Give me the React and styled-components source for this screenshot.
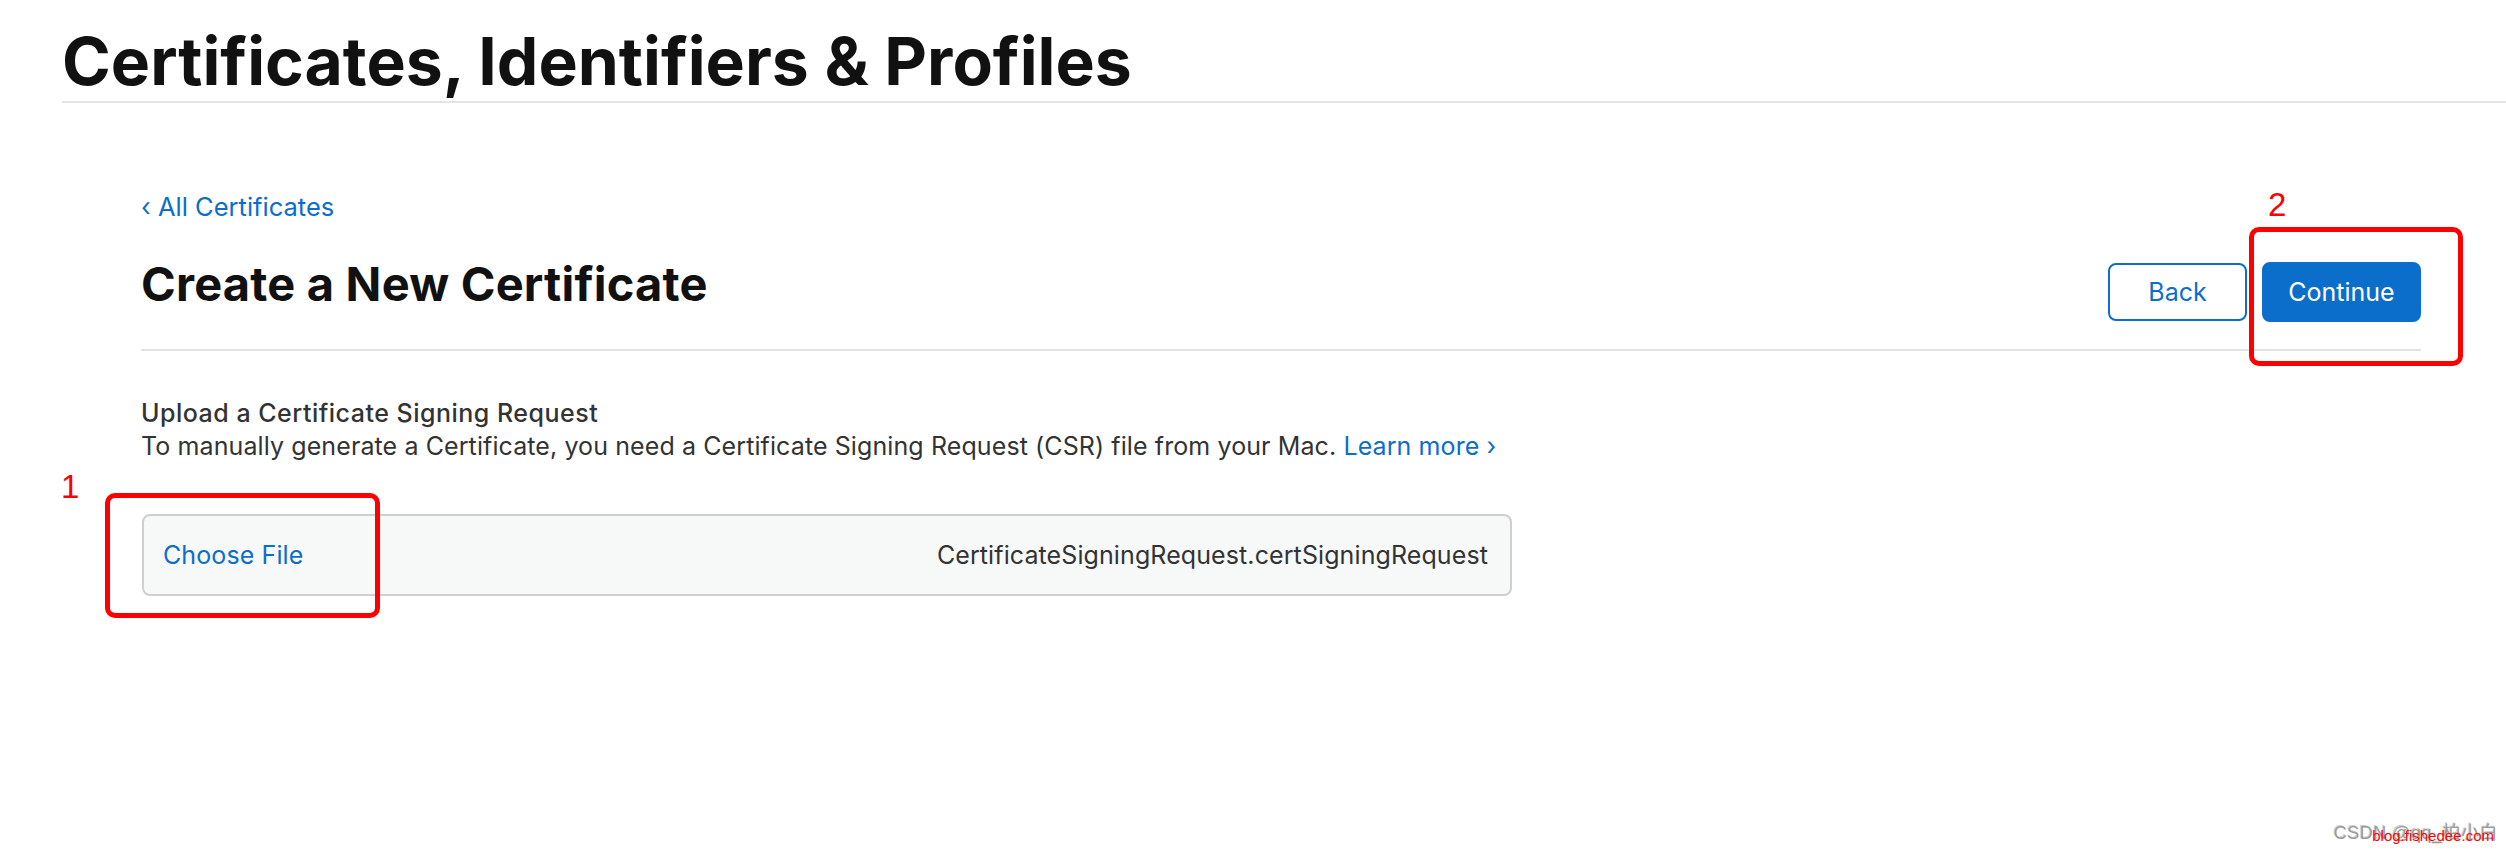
import React from 'react';
import styled, { createGlobalStyle } from 'styled-components';

// Styles globaux
const GlobalStyle = createGlobalStyle`
  body {
    margin: 0;
    background: #ffffff;
    font-family: Inter, "Noto Sans", "Liberation Sans", sans-serif;
    color: #333333;
  }
`;

const Page = styled.div`
  position: relative;
  min-height: 854px;
  overflow: hidden;
`;

const Header = styled.header`
  margin-left: 62px;
  padding-top: 21px;
  border-bottom: 2px solid #e5e5e5;
`;

const PageTitle = styled.h1`
  margin: 0;
  font-size: 66px;
  line-height: 80px;
  font-weight: 700;
  color: #111111;
`;

const Main = styled.main`
  padding: 89px 85px 0 141px;
`;

const Breadcrumb = styled.a`
  display: block;
  font-size: 25.5px;
  line-height: 30px;
  color: #0b6ecb;
  text-decoration: none;
`;

const TitleRow = styled.div`
  display: flex;
  justify-content: space-between;
  align-items: flex-start;
  margin-top: 34px;
  padding-bottom: 27px;
  border-bottom: 2px solid #e2e2e2;
`;

const SectionTitle = styled.h2`
  margin: 0;
  font-size: 47px;
  line-height: 56px;
  font-weight: 700;
  letter-spacing: 0.2px;
  color: #111111;
`;

const Actions = styled.div`
  display: flex;
  align-items: center;
  gap: 15px;
  padding-top: 6px;
`;

const Annotated = styled.div`
  position: relative;
  display: flex;
`;

const Button = styled.button`
  box-sizing: border-box;
  height: ${(p) => (p.$primary ? '60px' : '58px')};
  width: ${(p) => (p.$primary ? '159px' : '139px')};
  border-radius: 8px;
  border: 2px solid #0b6ecb;
  background: ${(p) => (p.$primary ? '#0b6ecb' : '#ffffff')};
  color: ${(p) => (p.$primary ? '#ffffff' : '#0b6ecb')};
  font-family: inherit;
  font-size: 25px;
  font-weight: 400;
  cursor: pointer;
`;

const Upload = styled.section`
  margin-top: 46px;
`;

const Label = styled.div`
  font-size: 25px;
  line-height: 33px;
  font-weight: 500;
  letter-spacing: 0.5px;
  color: #333333;
`;

const Description = styled.p`
  margin: 0;
  font-size: 25px;
  line-height: 33px;
  letter-spacing: 0.1px;
  color: #333333;
`;

const Link = styled.a`
  color: #0b6ecb;
  text-decoration: none;
`;

const FileBox = styled.div`
  position: relative;
  box-sizing: border-box;
  display: flex;
  align-items: center;
  justify-content: space-between;
  width: 1370px;
  height: 82px;
  margin: 51px 0 0 1px;
  padding: 0 22px 0 19px;
  background: #f7f8f8;
  border: 2px solid #cfcfcf;
  border-radius: 8px;
  font-size: 25px;
  letter-spacing: 0.1px;
`;

const ChooseFile = styled.span`
  color: #0b6ecb;
`;

const FileName = styled.span`
  color: #333333;
`;

// Annotations rouges posées par-dessus la capture
const Marker = styled.div`
  position: absolute;
  box-sizing: border-box;
  border: 5px solid #ff0000;
  border-radius: 10px;
  pointer-events: none;
  inset: ${(p) => p.$inset};
  width: ${(p) => p.$width || 'auto'};
`;

const MarkerLabel = styled.span`
  position: absolute;
  left: ${(p) => p.$left}px;
  top: ${(p) => p.$top}px;
  font-family: "Liberation Sans", Arial, sans-serif;
  font-size: 33px;
  line-height: 33px;
  color: #ff0000;
`;

const Watermark = styled.div`
  position: absolute;
  right: 8px;
  bottom: 10px;
  font-family: "Liberation Sans", "Noto Sans CJK SC", sans-serif;
  font-size: 18px;
  letter-spacing: 0.5px;
  color: #9a9a9a;
  text-shadow: 1px 1px 0 #ffffff, -1px -1px 0 #d0d0d0;
`;

const WatermarkBlog = styled.span`
  position: absolute;
  right: 4px;
  bottom: 0;
  font-size: 15px;
  letter-spacing: 0;
  color: #ff0000;
  text-shadow: none;
`;

const App = () => {
  return (
    <Page>
      <GlobalStyle />
      <Header>
        <PageTitle>Certificates, Identifiers &amp; Profiles</PageTitle>
      </Header>

      <Main>
        <Breadcrumb href="#">‹ All Certificates</Breadcrumb>

        <TitleRow>
          <SectionTitle>Create a New Certificate</SectionTitle>
          <Actions>
            <Button>Back</Button>
            <Annotated>
              <Button $primary>Continue</Button>
              <Marker $inset="-35px -42px -44px -13px">
                <MarkerLabel $left={14} $top={-44}>2</MarkerLabel>
              </Marker>
            </Annotated>
          </Actions>
        </TitleRow>

        <Upload>
          <Label>Upload a Certificate Signing Request</Label>
          <Description>
            To manually generate a Certificate, you need a Certificate Signing Request (CSR) file from your Mac.{' '}
            <Link href="#">Learn more ›</Link>
          </Description>
          <FileBox>
            <ChooseFile>Choose File</ChooseFile>
            <FileName>CertificateSigningRequest.certSigningRequest</FileName>
            <Marker $inset="-23px auto -24px -39px" $width="275px">
              <MarkerLabel $left={-49} $top={-28}>1</MarkerLabel>
            </Marker>
          </FileBox>
        </Upload>
      </Main>

      <Watermark>
        CSDN @qq_柏小白
        <WatermarkBlog>blog.fishedee.com</WatermarkBlog>
      </Watermark>
    </Page>
  );
};

export default App;
